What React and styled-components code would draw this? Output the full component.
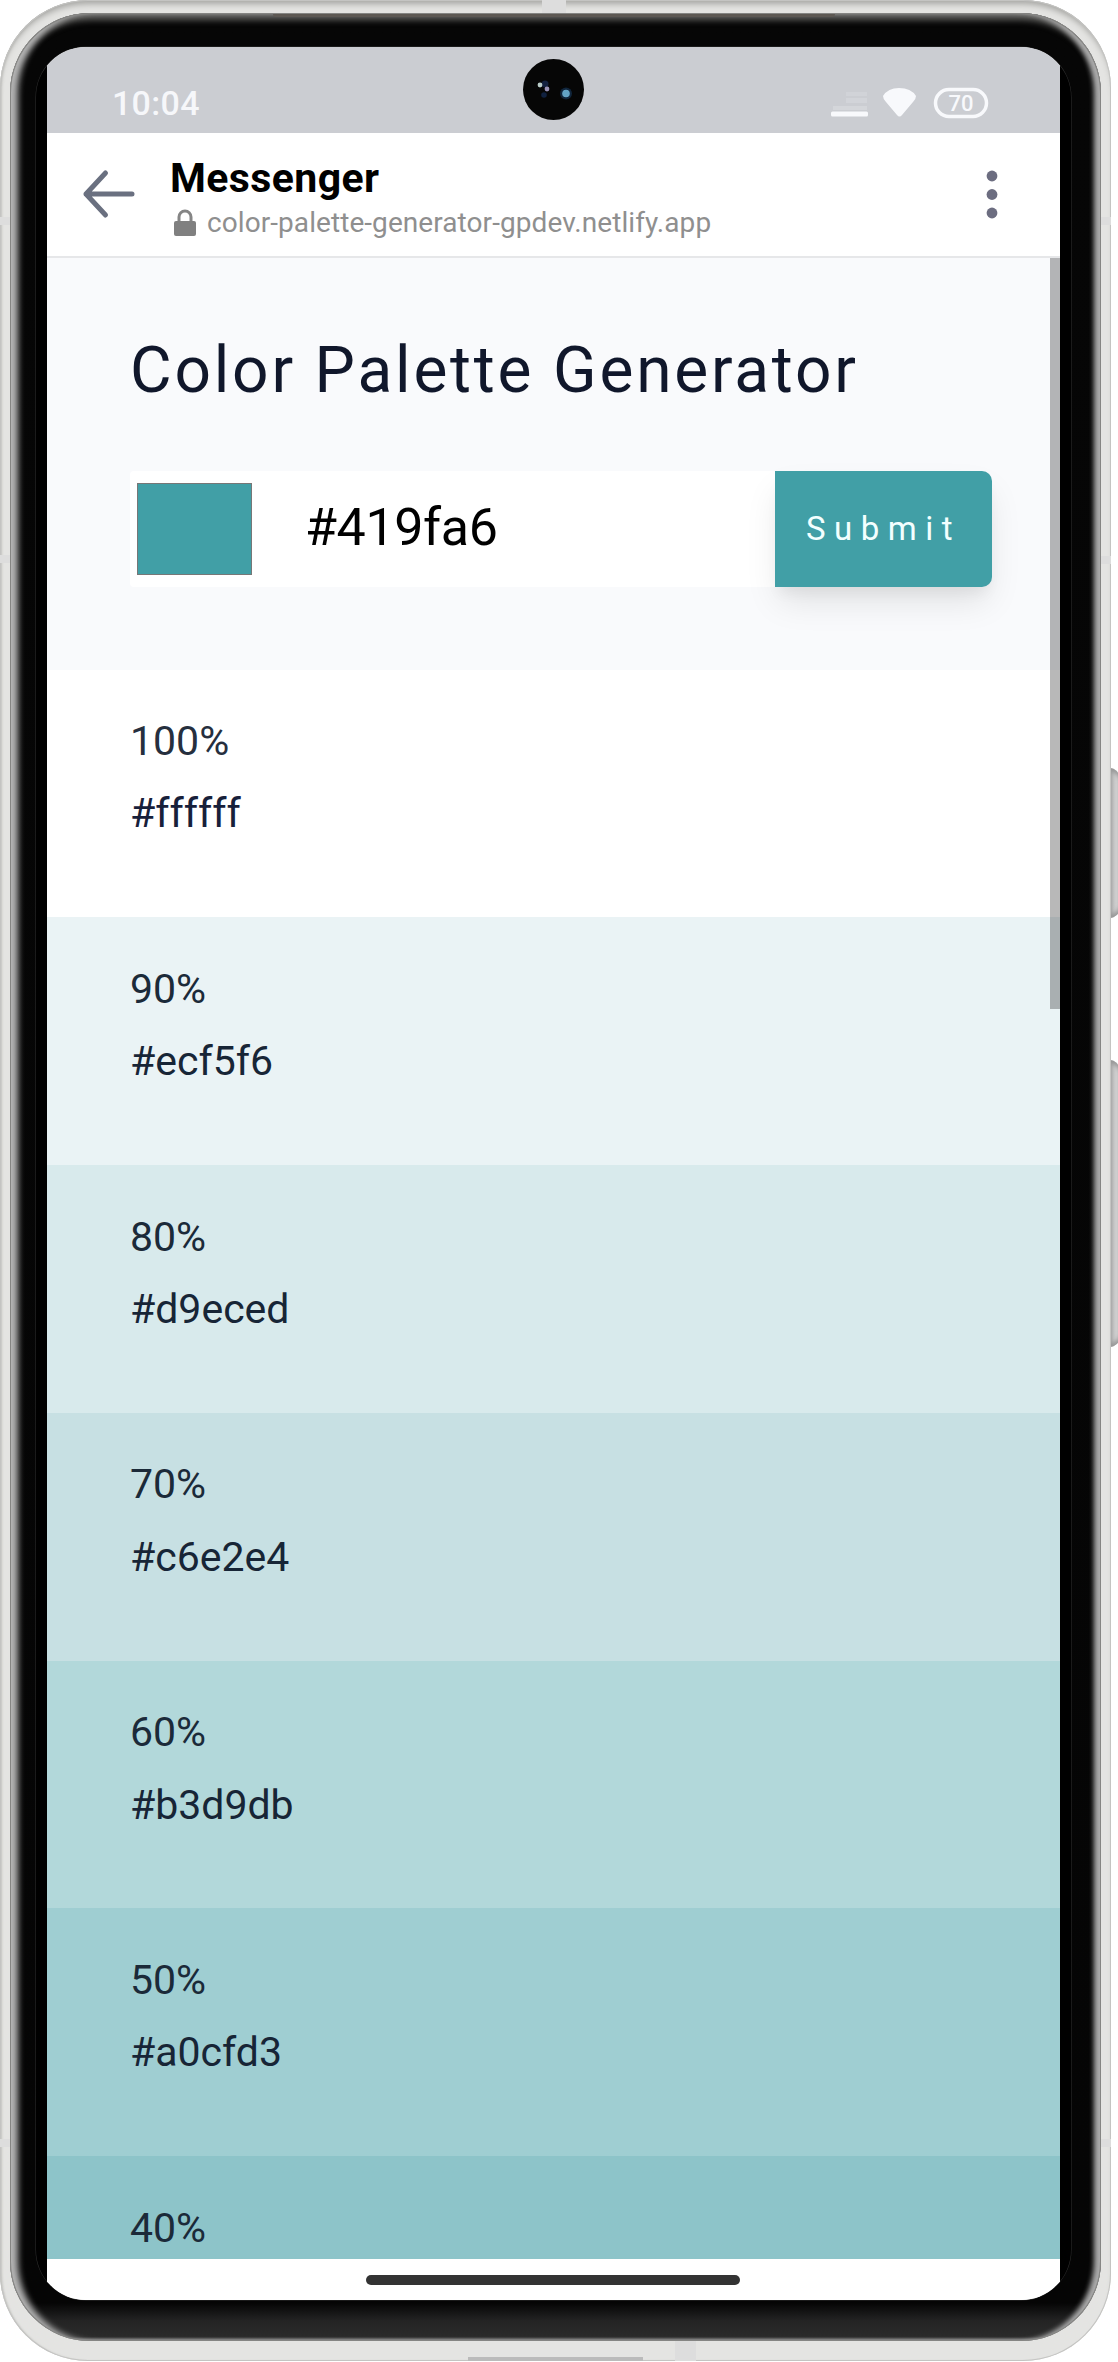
import React from "react";
import styled, { createGlobalStyle } from "styled-components";

const GlobalStyle = createGlobalStyle`
  *, *::before, *::after { box-sizing: border-box; }
  body { margin: 0; background: #fff; font-family: Roboto, "Liberation Sans", sans-serif; }
  h1, p { margin: 0; font-weight: 400; }
`;

const Stage = styled.main`
  position: relative;
  width: 1118px;
  height: 2362px;
  overflow: hidden;
  background: #fff;
`;

const Body = styled.div`
  position: relative;
  width: 1111px;
  height: 2361px;
  padding: 13px 10px 20px;
  overflow: hidden;
  border-radius: 88px;
  background: #e4e4e2;
  box-shadow: inset 0 0 0 1px #c4c4c2, inset 0 7px 6px -3px #a5a5a2, inset 2px 0 2px #c9c9c6;
`;

const Bezel = styled.div`
  height: 2328px;
  padding: 34px 30px 41px 26px;
  border-radius: 80px;
  background: linear-gradient(#060606, #050505 2290px, #242424 2308px, #2b2b2b 2324px, #777 2327px);
  box-shadow: inset 0 0 0 1px #858583, inset 10px 0 6px -2px #b4b4b4, inset -8px 0 5px -1px #aaa,
    inset 0 9px 6px -2px #60605e;
`;

const Glass = styled.div`
  height: 2253px;
  padding: 0 11px;
  overflow: hidden;
  border-radius: 50px;
  background: #000;
  box-shadow: 0 0 0 0.5px #303030;
`;

const Screen = styled.div`
  position: relative;
  height: 100%;
  display: flex;
  flex-direction: column;
  background: #fff;
`;

const Earpiece = styled.span`
  position: absolute;
  top: 14px;
  left: 273px;
  width: 562px;
  height: 3px;
  border-radius: 0 0 6px 6px;
  background: #5d5853;
`;

const Seam = styled.span`
  position: absolute;
  left: ${(p) => p.$x}px;
  top: ${(p) => p.$y}px;
  width: ${(p) => p.$w}px;
  height: ${(p) => p.$h}px;
  background: ${(p) => p.$tone || "#dddddd"};
`;

const SideKey = styled.span`
  position: absolute;
  left: 1106px;
  top: ${(p) => p.$y}px;
  width: 13px;
  height: ${(p) => p.$h}px;
  border-radius: 0 9px 9px 0;
  background: linear-gradient(90deg, #a8a8a8 5px, #c4c4c4 8px, #dedede 12px);
  box-shadow: inset 0 5px 4px -1px #999, inset 0 -5px 4px -1px #999;
`;

const Camera = styled.svg`
  position: absolute;
  left: 476px;
  top: 12px;
  width: 61px;
  height: 61px;
`;

const StatusBar = styled.div`
  display: flex;
  flex: none;
  align-items: center;
  justify-content: space-between;
  height: 85.5px;
  padding: 25.5px 71px 0 65px;
  background: #cbcdd2;
`;

const Clock = styled.span`
  font-size: 34px;
  line-height: 40px;
  font-weight: 500;
  letter-spacing: 0.3px;
  color: #f6f7fa;
`;

const StatusIcons = styled.svg`
  width: 158px;
  height: 32px;
  font-family: Roboto, sans-serif;
`;

const BrowserBar = styled.header`
  display: flex;
  flex: none;
  align-items: center;
  height: 125.5px;
  padding: 0 62px 0 35px;
  border-bottom: 2px solid #e6e7e9;
`;

const BackIcon = styled.svg`
  width: 54px;
  height: 50px;
  margin-right: 34px;
`;

const PageInfo = styled.div`
  flex: 1;
  padding-top: 11px;
`;

const PageName = styled.p`
  font-size: 41px;
  line-height: 46px;
  font-weight: 700;
  letter-spacing: 0.4px;
  color: #000;
`;

const Address = styled.p`
  display: flex;
  align-items: center;
  gap: 10px;
  padding-left: 3px;
  font-size: 28px;
  line-height: 44px;
  letter-spacing: 0.07px;
  color: #8f8f8f;
`;

const MenuIcon = styled.svg`
  width: 12px;
  height: 50px;
`;

const Web = styled.div`
  position: relative;
  flex: none;
  height: 2000.5px;
  overflow: hidden;
`;

const Scrollbar = styled.span`
  position: absolute;
  top: -1px;
  right: 0;
  width: 10.5px;
  height: 752px;
  background: rgba(0, 0, 0, 0.28);
`;

const Generator = styled.section`
  height: 411.5px;
  padding: 75px 68px 0 83px;
  background: #f9fafc;
`;

const Title = styled.h1`
  font-size: 64px;
  line-height: 75px;
  letter-spacing: 2.8px;
  white-space: nowrap;
  color: #10172b;
`;

const Form = styled.div`
  display: flex;
  height: 116px;
  margin-top: 62.5px;
`;

const Field = styled.div`
  display: flex;
  flex: 1;
  align-items: center;
  gap: 53px;
  padding: 0 7px;
  background: #fff;
  border-radius: 4px 0 0 4px;
`;

const Swatch = styled.span`
  width: 115px;
  height: 92px;
  border: 1px solid #777;
  background: #419fa6;
`;

const HexValue = styled.span`
  padding-bottom: 1px;
  font-size: 52px;
  line-height: 58px;
  letter-spacing: -0.4px;
  color: #000;
`;

const Submit = styled.button`
  width: 217px;
  padding: 0;
  border: 0;
  border-radius: 0 10px 10px 0;
  background: #419fa6;
  box-shadow: 0 18px 34px -4px rgba(0, 0, 0, 0.1), 0 10px 14px -4px rgba(0, 0, 0, 0.05);
  font: 400 33px/40px Roboto, sans-serif;
  letter-spacing: 8.5px;
  color: #f3ffff;
`;

const Shade = styled.article`
  height: 247.8px;
  padding: 35.6px 0 0 83px;
  background: ${(p) => p.$color};
  font-size: 41px;
  line-height: 72.3px;
`;

const Weight = styled.p`
  color: ${(p) => (p.$plain ? "#262f3e" : "#1b2a39")};
`;

const Hex = styled.p`
  color: ${(p) => (p.$plain ? "#17203a" : "#172536")};
`;

const NavBar = styled.footer`
  display: flex;
  flex: 1;
  justify-content: center;
  padding: 16px 2px 0 0;
  background: #fff;
`;

const HomePill = styled.span`
  width: 374px;
  height: 10px;
  border-radius: 5px;
  background: #333;
`;

const shades = [
  { weight: 100, hex: "#ffffff", fill: "#ffffff" },
  { weight: 90, hex: "#ecf5f6", fill: "#eaf3f5" },
  { weight: 80, hex: "#d9eced", fill: "#d8eaec" },
  { weight: 70, hex: "#c6e2e4", fill: "#c7e0e3" },
  { weight: 60, hex: "#b3d9db", fill: "#b2d8da" },
  { weight: 50, hex: "#a0cfd3", fill: "#9fced2" },
  { weight: 40, fill: "#8dc4c9" },
];

export default function App() {
  return (
    <>
      <GlobalStyle />
      <Stage>
        <SideKey $y={768} $h={150} />
        <SideKey $y={1060} $h={287} />
        <Body>
          <Bezel>
            <Glass>
              <Screen>
                <StatusBar>
                  <Clock>10:04</Clock>
                  <StatusIcons viewBox="0 0 158 32">
                    <g fill="#f8f9fc">
                      <rect x="15" y="5" width="21" height="4" opacity=".14" />
                      <rect x="15" y="11" width="21" height="5" opacity=".16" />
                      <rect x="2" y="19" width="34" height="4" opacity=".2" />
                      <rect x="0" y="24.5" width="37" height="5" rx="1.5" />
                      <path d="M52 9 Q57 1 68 1 Q80 1 85 9 Q85 12 82 15 L71 28 Q68.500 31 66 28 L55 15 Q52 12 52 9Z" />
                    </g>
                    <rect x="104.500" y="2.500" width="51" height="27" rx="13.500" fill="none" stroke="#f8f9fc" strokeWidth="3.500" />
                    <text x="130" y="24" textAnchor="middle" fontSize="22" fontWeight="500" fill="#f8f9fc">70</text>
                  </StatusIcons>
                </StatusBar>
                <BrowserBar>
                  <BackIcon viewBox="0 0 54 50" fill="none" stroke="#6a7080" strokeWidth="5" strokeLinecap="round" strokeLinejoin="round">
                    <path d="M50 25H4M23.500 4L4 25L23.500 46" />
                  </BackIcon>
                  <PageInfo>
                    <PageName>Messenger</PageName>
                    <Address>
                      <svg width="24" height="28" viewBox="0 0 24 28">
                        <path d="M6 14V8a6 6 0 0 1 12 0v6" fill="none" stroke="#858585" strokeWidth="3" />
                        <rect x="1" y="12" width="22" height="15" rx="2" fill="#808080" />
                      </svg>
                      <span>color-palette-generator-gpdev.netlify.app</span>
                    </Address>
                  </PageInfo>
                  <MenuIcon viewBox="0 0 12 50" fill="#6c6d80">
                    <circle cx="6" cy="7" r="5.400" />
                    <circle cx="6" cy="25.500" r="5.400" />
                    <circle cx="6" cy="44" r="5.400" />
                  </MenuIcon>
                </BrowserBar>
                <Web>
                  <Generator>
                    <Title>Color Palette Generator</Title>
                    <Form>
                      <Field>
                        <Swatch />
                        <HexValue>#419fa6</HexValue>
                      </Field>
                      <Submit>Submit</Submit>
                    </Form>
                  </Generator>
                  {shades.map((s) => (
                    <Shade key={s.weight} $color={s.fill}>
                      <Weight $plain={s.weight === 100}>{s.weight}%</Weight>
                      {s.hex && <Hex $plain={s.weight === 100}>{s.hex}</Hex>}
                    </Shade>
                  ))}
                  <Scrollbar />
                </Web>
                <NavBar>
                  <HomePill />
                </NavBar>
                <Camera viewBox="0 0 61 61">
                  <circle cx="30.500" cy="30.500" r="30.500" fill="#060606" />
                  <circle cx="22" cy="25" r="3.500" fill="#13213f" />
                  <circle cx="21" cy="36" r="2.800" fill="#10213f" />
                  <circle cx="17" cy="26" r="2.400" fill="#b9ccc8" />
                  <circle cx="24" cy="30" r="2.400" fill="#9a93b8" />
                  <circle cx="43" cy="34.500" r="6" fill="#10253c" />
                  <circle cx="43" cy="34.500" r="3.800" fill="#62a3c6" />
                </Camera>
              </Screen>
            </Glass>
          </Bezel>
          <Earpiece />
          <Seam $x={542} $y={0} $w={24} $h={13} />
          <Seam $x={0} $y={217} $w={10} $h={8} />
          <Seam $x={1101} $y={217} $w={10} $h={8} />
          <Seam $x={0} $y={555} $w={10} $h={8} />
          <Seam $x={1101} $y={556} $w={10} $h={8} />
          <Seam $x={0} $y={2139} $w={10} $h={8} />
          <Seam $x={1101} $y={2139} $w={10} $h={8} />
          <Seam $x={675} $y={2341} $w={21} $h={20} />
          <Seam $x={468} $y={2357} $w={175} $h={4} $tone="#bbbbbb" />
        </Body>
      </Stage>
    </>
  );
}
